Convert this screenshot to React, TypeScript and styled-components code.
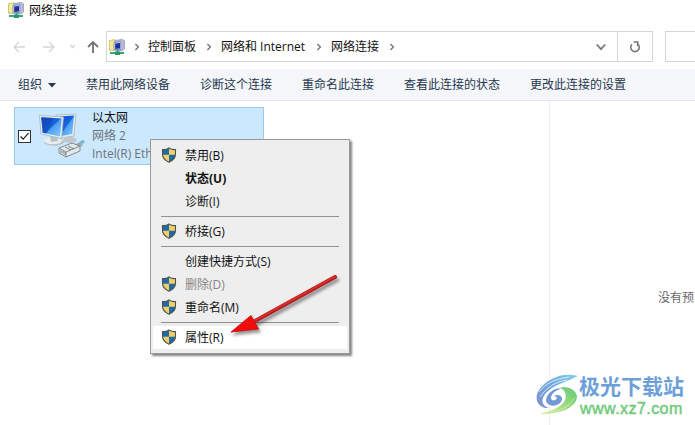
import React from 'react';
import styled, { createGlobalStyle } from 'styled-components';

const GlobalStyle = createGlobalStyle`
  * { box-sizing: border-box; }
  body {
    margin: 0;
    background: #fff;
    overflow: hidden;
    font-family: "Open Sans", "Noto Sans CJK SC", sans-serif;
    font-size: 12px;
    line-height: 18px;
    color: #111;
  }
  svg { display: block; flex: none; }
`;

const Window = styled.div`
  position: relative;
  display: flex;
  flex-direction: column;
  width: 695px;
  height: 425px;
  overflow: hidden;
  background: #fff;
  white-space: nowrap;
`;

const TitleBar = styled.header`
  display: flex;
  align-items: center;
  gap: 5px;
  height: 22px;
  padding-left: 8px;
  flex: none;

  svg { margin-bottom: 2px; }
`;

const NavRow = styled.nav`
  display: flex;
  height: 31px;
  margin: 9px 0 7px;
  flex: none;
`;

const NavButtons = styled.div`
  width: 106px;
  display: flex;
  align-items: center;
  padding-top: 1px;
`;

const AddressBox = styled.div`
  display: flex;
  align-items: stretch;
  width: 547px;
  border: 1px solid #d5d5d5;
`;

const Crumbs = styled.div`
  display: flex;
  align-items: center;
  flex: 1;
  padding-left: 2px;
`;

const Crumb = styled.span<{ $width: number }>`
  width: ${(p) => p.$width}px;
`;

const CrumbArrow = styled.span<{ $width?: number }>`
  display: flex;
  align-items: center;
  justify-content: center;
  width: ${(p) => p.$width ?? 25}px;
`;

const DropButton = styled.span`
  display: flex;
  align-items: center;
  justify-content: center;
  width: 32px;
`;

const Refresh = styled.div`
  display: flex;
  align-items: center;
  justify-content: center;
  width: 35px;
  border-left: 1px solid #d5d5d5;
`;

const SearchBox = styled.div`
  flex: 1;
  margin-left: 12px;
  border: 1px solid #d5d5d5;
  border-right: none;
`;

const Toolbar = styled.div`
  display: flex;
  align-items: center;
  gap: 30px;
  height: 32px;
  padding: 1px 0 0 18px;
  flex: none;
  background: #f4f6f9;
  border-bottom: 1px solid #e4e6e9;
  color: #26374f;
`;

const Command = styled.span`
  display: flex;
  align-items: center;
  gap: 6px;
`;

const Content = styled.main`
  display: flex;
  flex: 1;
`;

const Connections = styled.section`
  flex: none;
  width: 549px;
  padding: 6px 0 0 14px;
`;

const Preview = styled.aside`
  display: flex;
  align-items: center;
  flex: none;
  width: 146px;
  padding: 69px 0 0 108px;
  border-left: 1px solid #eeeff1;
  color: #686868;
`;

const Connection = styled.div`
  display: flex;
  align-items: center;
  width: 250px;
  height: 58px;
  padding-left: 3px;
  background: #cce8ff;
  border: 1px solid #99c9ec;
`;

const CheckBox = styled.span`
  display: flex;
  align-items: center;
  justify-content: center;
  width: 13px;
  height: 13px;
  margin-right: 7px;
  background: #fff;
  border: 1px solid #333;
`;

const Details = styled.div`
  display: flex;
  flex-direction: column;
  margin-left: 6px;
`;

const Detail = styled.span<{ $primary?: boolean }>`
  height: 18px;
  color: ${(p) => (p.$primary ? '#111' : '#6c747b')};
`;

const Menu = styled.div`
  position: absolute;
  left: 150px;
  top: 139px;
  width: 200px;
  height: 215px;
  padding: 4px 2px;
  background: #eee;
  border: 1px solid #989898;
  box-shadow: 2px 2px 2px rgba(0, 0, 0, 0.48);
`;

const MenuItem = styled.div<{ $bold?: boolean; $muted?: boolean; $active?: boolean }>`
  display: flex;
  align-items: center;
  height: 23px;
  color: ${(p) => (p.$muted ? '#858585' : '#111')};
  font-weight: ${(p) => (p.$bold ? 700 : 400)};
  background: ${(p) => (p.$active ? '#fff' : 'transparent')};
`;

const MenuIcon = styled.span`
  width: 32px;
  padding: 0 0 2px 8px;
`;

const Separator = styled.div`
  height: 1px;
  margin: 3px 8px;
  background: #929292;
`;

const PointerArrow = styled.svg`
  position: absolute;
  left: 225px;
  top: 265px;
  filter: drop-shadow(2px 3px 1.5px rgba(0, 0, 0, 0.4));
`;

const Watermark = styled.div`
  position: absolute;
  left: 535px;
  top: 373px;
  display: flex;
`;

const WatermarkText = styled.div`
  display: flex;
  flex-direction: column;
  margin-left: 1px;
`;

const SiteName = styled.span`
  height: 27px;
  font: 700 21px/25px "Noto Sans CJK SC", sans-serif;
  color: #6d9fd9;
`;

const SiteUrl = styled.span`
  height: 18px;
  margin: 0 0 0 1px;
  font: 400 16px/18px "Liberation Sans", sans-serif;
  letter-spacing: 0.45px;
  color: #71ca7c;
  -webkit-text-stroke: 0.5px #71ca7c;
`;

const NetworkIcon = () => (
  <svg width="16" height="16" viewBox="0 0 16 16">
    <path d="M.5 1.500 6 .7v10.600H.5z" fill="#f3e994" stroke="#c5b95e" strokeWidth=".8" />
    <path d="m6 1.500 7-1 2.500 1.300v8L13 12l-7-1z" fill="#b9bddb" stroke="#878eae" strokeWidth=".7" />
    <path d="m5 3.500 6.800-.7v7.500L5 10.800z" fill="#dce5f8" stroke="#626fa5" strokeWidth=".7" />
    <path d="m6.200 4.500 4.800-.5v5.500l-4.800.5z" fill="#1c2f9b" />
    <path d="M7.500 11h2v2H15v2H1v-2h6.500z" fill="#37a57c" />
    <path d="M6 12.500h5V16H6z" fill="#259766" />
  </svg>
);

const Chevron = ({ down = false, size = 8, color = '#777' }: { down?: boolean; size?: number; color?: string }) => (
  <svg width={size} height={size} viewBox="0 0 8 8" fill="none" stroke={color} strokeWidth="1.4">
    <path d={down ? 'm.6 2 3.400 3.700L7.400 2' : 'm2.400 1 3 3-3 3'} />
  </svg>
);

const NavigationArrows = () => (
  <svg width="106" height="20" viewBox="0 0 106 20" fill="none" strokeWidth="1.4">
    <path d="M25 10H14m5-5-5 5 5 5M43 10h11m-5-5 5 5-5 5" stroke="#d6d6d6" />
    <path d="m70 8 2.500 2.500L75 8" stroke="#d4d4d4" />
    <path d="M93 16V5m-5 5 5-5 5 5" stroke="#777" strokeWidth="1.9" />
  </svg>
);

const RefreshIcon = () => (
  <svg width="12" height="12" viewBox="0 0 12 12" fill="none" stroke="#777" strokeWidth="1.6">
    <path d="M9 3.200A4.300 4.300 0 1 1 3 3.200M4.500 1h4.200v4.200" />
  </svg>
);

const ShieldIcon = () => (
  <svg width="16" height="16" viewBox="0 0 16 16">
    <path d="M8 1C6 2.500 3.800 2.800 1.500 2.600V7c0 4.100 2.700 6.600 6.500 8.200z" fill="#216aa5" />
    <path d="M8 1c2 1.500 4.200 1.800 6.500 1.600V7c0 4.100-2.700 6.600-6.500 8.200z" fill="#f1cf67" />
    <path d="M1.500 7.700H8v7.500C4.100 13.600 1.700 11.400 1.500 7.700z" fill="#f1cf67" />
    <path d="M8 7.700h6.500c-.2 3.700-2.600 5.900-6.500 7.500z" fill="#216aa5" />
    <path d="M8 1C6 2.500 3.800 2.800 1.500 2.600V7c0 4.100 2.700 6.600 6.500 8.200 3.800-1.600 6.500-4.100 6.500-8.200V2.600C12.200 2.800 10 2.500 8 1z" fill="none" stroke="#4c5356" strokeWidth="1.1" />
  </svg>
);

const ComputersIcon = () => (
  <svg width="48" height="48" viewBox="2 1 48 48">
    <defs>
      <linearGradient id="screen" x1="0" y1="0" x2="1" y2="1">
        <stop offset="0" stopColor="#154bc4" />
        <stop offset=".5" stopColor="#1765df" />
        <stop offset=".53" stopColor="#4d9cef" />
        <stop offset="1" stopColor="#84cbff" />
      </linearGradient>
    </defs>
    <ellipse cx="34" cy="29" rx="7" ry="3" fill="#c0c8cc" />
    <path d="m20 4 20-1-2 22-14 2z" fill="#e6edf0" stroke="#9eafb9" strokeWidth=".7" />
    <path d="m23 5.500 15-1-1.800 18.500L25 25z" fill="url(#screen)" />
    <ellipse cx="18" cy="31" rx="10" ry="3.700" fill="#b7c0c5" />
    <ellipse cx="17" cy="30" rx="9" ry="3.200" fill="#e9edee" />
    <path d="m14 25 7-1 1 6-7 1z" fill="#b7c3c9" />
    <path d="m3.500 4.500 24 1.500-2 21.500-20.500-4.500z" fill="#ecf1f3" stroke="#a2b0b7" strokeWidth=".8" />
    <path d="m5.200 6.200 20.500 1.300-1.700 18-17.300-3.800z" fill="url(#screen)" />
    <path d="m5.200 6.200 12 .8L11 22.600l-4.300-.9z" fill="#0e3fac" opacity=".45" />
    <path d="m40 35 8-5" stroke="#65b7d2" strokeWidth="3" />
    <path d="m38 34 7-3 2 3-7 5z" fill="#9baeb5" />
    <path d="m23 37 13-5 8 3v5l-14 6-7-4z" fill="#e3e8ea" stroke="#7e898f" />
    <path d="m23 37 7 4 14-6M30 41v5" fill="none" stroke="#849097" />
    <path d="m25 39v3m2-2v3m2-2v3M29 36l6 3m-3-4 6 3" stroke="#616c70" strokeWidth=".8" />
  </svg>
);

const SwirlLogo = () => (
  <svg width="43" height="43" viewBox="0 0 43 43">
    <defs>
      <linearGradient id="swirlBlue" x1="0" x2="1" y1="1" y2="0">
        <stop stopColor="#7f8fcd" /><stop offset=".5" stopColor="#72a6dc" /><stop offset="1" stopColor="#82d2e8" />
      </linearGradient>
      <linearGradient id="swirlGreen" x1="0" x2="1" y1="1" y2="0">
        <stop stopColor="#d6ed88" /><stop offset="1" stopColor="#63c978" />
      </linearGradient>
    </defs>
    <path d="M43 3C27-1 12 6 4 17c-6 9 0 19 10 18-7-2-9-8-3-15C19 11 32 9 43 3z" fill="url(#swirlBlue)" />
    <path d="M26 16c-7-3-18 8-14 14 5 6 16 1 15-5-1-3-5-4-8-2 3 0 4 3 1 4-6 2-6-8 6-11z" fill="#7299d6" />
    <path d="M28 14c8 0 13 4 14 9 0 11-15 18-37 18 12-3 22-7 25-14 2-6 0-10-5-12z" fill="url(#swirlGreen)" />
    <path d="M4 19C11 10 20 6 34 4M5 24C12 14 20 9 32 7" fill="none" stroke="#fff" strokeWidth=".7" />
    <path d="M15 39c12-2 20-6 24-14" fill="none" stroke="#effbed" strokeWidth=".5" />
  </svg>
);

const menuItems = [
  { label: '禁用(B)', shield: true },
  { label: '状态(U)', bold: true },
  { label: '诊断(I)', divider: true },
  { label: '桥接(G)', shield: true, divider: true },
  { label: '创建快捷方式(S)' },
  { label: '删除(D)', shield: true, muted: true },
  { label: '重命名(M)', shield: true, divider: true },
  { label: '属性(R)', shield: true, active: true },
];

const crumbs = [
  { label: '控制面板', width: 48 },
  { label: '网络和 Internet', width: 85 },
  { label: '网络连接', width: 48 },
];

const commands = ['禁用此网络设备', '诊断这个连接', '重命名此连接', '查看此连接的状态', '更改此连接的设置'];

export default function App() {
  return (
    <>
      <GlobalStyle />
      <Window>
        <TitleBar><NetworkIcon />网络连接</TitleBar>
        <NavRow>
          <NavButtons><NavigationArrows /></NavButtons>
          <AddressBox>
            <Crumbs>
              <NetworkIcon />
              <CrumbArrow $width={23}><Chevron /></CrumbArrow>
              {crumbs.map((c) => (
                <React.Fragment key={c.label}>
                  <Crumb $width={c.width}>{c.label}</Crumb>
                  <CrumbArrow><Chevron /></CrumbArrow>
                </React.Fragment>
              ))}
            </Crumbs>
            <DropButton><Chevron down size={10} /></DropButton>
            <Refresh><RefreshIcon /></Refresh>
          </AddressBox>
          <SearchBox />
        </NavRow>
        <Toolbar>
          <Command>
            组织
            <svg width="8" height="5" viewBox="0 0 8 5"><path d="M0 0h8L4 4.500z" fill="#26374f" /></svg>
          </Command>
          {commands.map((label) => <Command key={label}>{label}</Command>)}
        </Toolbar>
        <Content>
          <Connections>
            <Connection>
              <CheckBox>
                <svg width="11" height="11" viewBox="0 0 11 11"><path d="m1.500 5.500 2.700 2.700 5.300-6" fill="none" stroke="#222" strokeWidth="1.2" /></svg>
              </CheckBox>
              <ComputersIcon />
              <Details>
                <Detail $primary>以太网</Detail>
                <Detail>网络 2</Detail>
                <Detail>Intel(R) Eth</Detail>
              </Details>
            </Connection>
          </Connections>
          <Preview>没有预</Preview>
        </Content>
        <Menu>
          {menuItems.map((item) => (
            <React.Fragment key={item.label}>
              <MenuItem $bold={item.bold} $muted={item.muted} $active={item.active}>
                <MenuIcon>{item.shield && <ShieldIcon />}</MenuIcon>
                {item.label}
              </MenuItem>
              {item.divider && <Separator />}
            </React.Fragment>
          ))}
        </Menu>
        <PointerArrow width="120" height="75" viewBox="0 0 120 75">
          <path d="m30 56 80-44" stroke="#b51f20" strokeWidth="4" strokeLinecap="round" />
          <path d="m30 55.300 80-44" stroke="#df3030" strokeWidth="1.5" strokeLinecap="round" />
          <path d="m6 67 20-16.500L29 56l4.500 8z" fill="#f20b0b" stroke="#c91616" />
        </PointerArrow>
        <Watermark>
          <SwirlLogo />
          <WatermarkText>
            <SiteName>极光下载站</SiteName>
            <SiteUrl>www.xz7.com</SiteUrl>
          </WatermarkText>
        </Watermark>
      </Window>
    </>
  );
}
